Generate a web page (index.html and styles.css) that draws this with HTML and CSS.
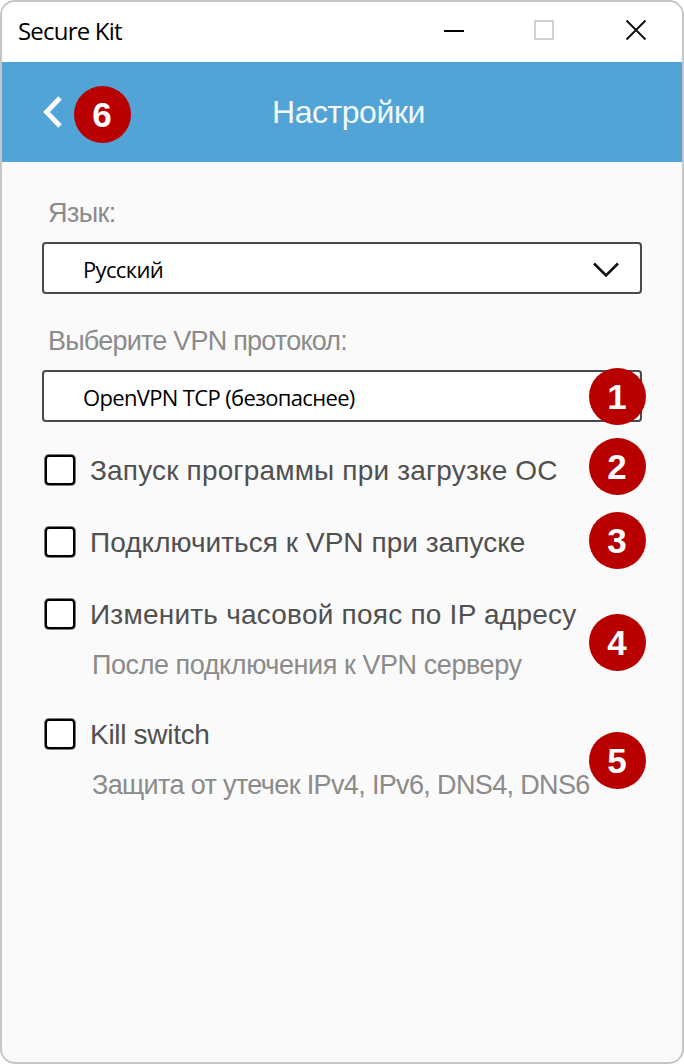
FILE: index.html
```html
<!DOCTYPE html>
<html lang="ru">
<head>
    <meta charset="UTF-8">
    <meta name="viewport" content="width=device-width, initial-scale=1.0">
    <title>Secure Kit</title>
    <link rel="stylesheet" href="styles.css">
</head>
<body>

    <div class="window">
        <div class="title-bar">
            <span class="app-name">Secure Kit</span>
            <div class="window-buttons">
                <svg width="20" height="20" viewBox="0 0 20 20"><path d="M0 11H20" stroke="#000" stroke-width="2"/></svg>
                <svg width="20" height="20" viewBox="0 0 20 20"><rect x="1" y="1" width="18" height="18" fill="none" stroke="#cdcdcd" stroke-width="1.8"/></svg>
                <svg width="22" height="20" viewBox="0 0 22 20"><path d="M1.5 0.5L20.5 19.5M20.5 0.5L1.5 19.5" stroke="#111" stroke-width="2"/></svg>
            </div>
        </div>

        <div class="header">
            <svg class="back" width="20" height="32" viewBox="0 0 20 32"><path d="M18 2L4.5 16L18 30" fill="none" stroke="#fff" stroke-width="4.8"/></svg>
            <span class="badge badge-back">6</span>
            <h1>Настройки</h1>
        </div>

        <div class="settings">
            <div class="field-label label-lang">Язык:</div>
            <div class="select">
                <span class="value-lang">Русский</span>
                <svg class="arrow" width="26" height="16" viewBox="0 0 26 16"><path d="M1 1.5L13 13.5L25 1.5" fill="none" stroke="#111" stroke-width="2.6"/></svg>
            </div>

            <div class="field-label label-protocol">Выберите VPN протокол:</div>
            <div class="select">
                <span class="value-protocol">OpenVPN TCP (безопаснее)</span>
                <span class="badge badge-1">1</span>
            </div>

            <!-- Options -->
            <div class="options">
                <div class="option">
                    <span class="checkbox"></span>
                    <span class="option-text text-autorun">Запуск программы при загрузке ОС</span>
                    <span class="badge badge-2">2</span>
                </div>
                <div class="option">
                    <span class="checkbox"></span>
                    <span class="option-text text-connect">Подключиться к VPN при запуске</span>
                    <span class="badge badge-3">3</span>
                </div>
                <div class="option">
                    <span class="checkbox"></span>
                    <span class="option-text text-timezone">Изменить часовой пояс по IP адресу</span>
                    <span class="badge badge-4">4</span>
                </div>
                <div class="hint hint-timezone">После подключения к VPN серверу</div>
                <div class="option">
                    <span class="checkbox"></span>
                    <span class="option-text text-kill">Kill switch</span>
                    <span class="badge badge-5">5</span>
                </div>
                <div class="hint hint-kill">Защита от утечек IPv4, IPv6, DNS4, DNS6</div>
            </div>
        </div>
    </div>

</body>
</html>
```

FILE: styles.css
```css
* {
    margin: 0;
    padding: 0;
    box-sizing: border-box;
}

body {
    font-family: "Liberation Sans", Arial, sans-serif;
    background-color: #fff;
    height: 100vh;
    overflow: hidden;
}

svg {
    display: block;
}

.window {
    height: 100vh;
    border: 2px solid #c6c6c6;
    border-radius: 15px;
    background-color: #fafafa;
    overflow: hidden;
}

/* Title bar */
.title-bar {
    height: 60px;
    padding: 0 35px 4px 16px;
    background-color: #fff;
    display: flex;
    justify-content: space-between;
    align-items: center;
}

.app-name {
    font-family: "Open Sans", sans-serif;
    font-size: 24px;
    letter-spacing: -0.8px;
    color: #000;
}

.window-buttons {
    display: flex;
    gap: 70px;
}

.window-buttons svg:last-child {
    margin-left: 1px;
}

/* Header */
.header {
    position: relative;
    height: 100px;
    background-color: #52a3d6;
    display: flex;
    align-items: center;
    padding-left: 40px;
}

.header h1 {
    margin-left: 210px;
    padding-top: 1px;
    font-size: 32px;
    font-weight: normal;
    letter-spacing: -0.45px;
    color: #f2faff;
}

/* Numbered badges */
.badge {
    position: absolute;
    width: 57px;
    height: 57px;
    padding-right: 1px;
    border-radius: 50%;
    background-color: #b90000;
    color: #fff;
    font-size: 35px;
    font-weight: bold;
    line-height: 58px;
    text-align: center;
}

.badge-back {
    left: 72px;
    top: 24px;
}

.badge-1 {
    right: -6px;
    top: -4px;
}

.badge-2 {
    right: -4px;
    top: 4px;
}

.badge-3 {
    right: -4px;
    top: 6px;
}

.badge-4 {
    right: -4px;
    top: 36px;
}

.badge-5 {
    right: -4px;
    top: 34px;
}

/* Settings form */
.settings {
    padding: 22px 40px 0;
}

.field-label {
    height: 58px;
    padding-left: 6px;
    line-height: 58px;
    font-size: 27px;
    color: #8b8b8b;
}

.label-lang {
    letter-spacing: -0.6px;
}

.select {
    position: relative;
    height: 52px;
    padding: 2px 21px 0 39px;
    border: 2px solid #4a4a4a;
    border-radius: 4px;
    background-color: #fff;
    display: flex;
    justify-content: space-between;
    align-items: center;
    font-family: "Open Sans", sans-serif;
    font-size: 22px;
    letter-spacing: -0.65px;
    color: #000;
}

.select .badge {
    font-family: "Liberation Sans", Arial, sans-serif;
    letter-spacing: 0;
}

.arrow {
    margin-top: 2px;
}

.label-protocol {
    margin-top: 18px;
    letter-spacing: -0.78px;
}

.options {
    padding-top: 12px;
}

.option {
    position: relative;
    height: 72px;
    padding-left: 3px;
    display: flex;
    align-items: center;
    gap: 15px;
}

.checkbox {
    width: 30px;
    height: 30px;
    border: 2px solid #000;
    border-radius: 4px;
    background-color: #fff;
    box-shadow: 0 0 0 1px #777;
}

.option-text {
    font-size: 28px;
    color: #505050;
    padding-top: 1px;
}

.text-autorun {
    letter-spacing: 0.17px;
}

.text-connect {
    letter-spacing: 0.04px;
}

.text-timezone {
    letter-spacing: 0.23px;
}

.text-kill {
    letter-spacing: -0.3px;
}

.hint {
    height: 48px;
    padding-left: 50px;
    line-height: 30px;
    font-size: 27px;
    color: #8b8b8b;
    white-space: nowrap;
}

.hint-timezone {
    letter-spacing: -0.43px;
}

.hint-kill {
    letter-spacing: -0.64px;
}
```
